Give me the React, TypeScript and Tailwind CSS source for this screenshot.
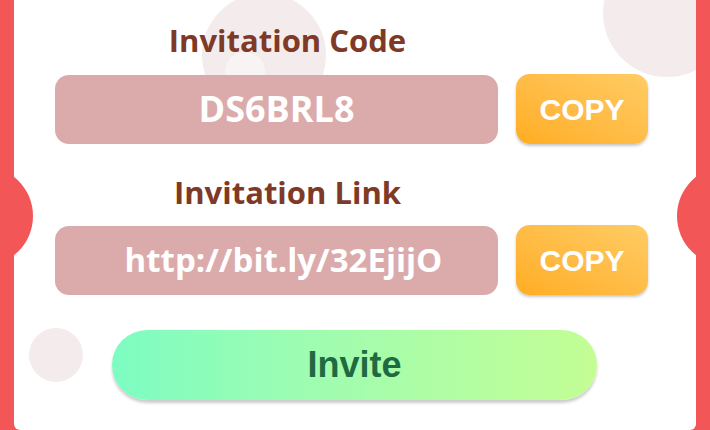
import React from "react";

const label = "font-['Open_Sans',sans-serif] font-bold text-[31px] leading-[40px] text-[#7e3a26] pr-[176px] text-center";
const field =
    "w-[443px] h-[69px] rounded-[14px] bg-[#dbabab] flex items-center justify-center font-['Open_Sans',sans-serif] font-bold text-white";

const CopyButton = () => (
    <button className="w-[132px] h-[70px] rounded-[14px] bg-gradient-to-tr from-[#ffad1f] to-[#ffcc62] shadow-[0_2px_3px_rgba(0,0,0,0.22)] font-['Liberation_Sans',Arial,sans-serif] font-bold text-[30px] text-white">
        COPY
    </button>
);

const App = () => {
    return (
        <div className="relative w-[710px] h-[430px] overflow-hidden bg-[#f25656] flex px-[14px]">
            {/* ticket notches */}
            <div className="absolute left-[-67px] top-[166px] w-[100px] h-[100px] rounded-full bg-[#f25656] z-10" />
            <div className="absolute right-[-67px] top-[166px] w-[100px] h-[100px] rounded-full bg-[#f25656] z-10" />

            <div className="relative flex-1 bg-white rounded-b-[6px] overflow-hidden">
                {/* background bubbles */}
                <div className="absolute left-[188px] top-[-7px] w-[124px] h-[124px] rounded-full bg-[#f4ecec]" />
                <div className="absolute left-[211px] top-[52px] w-[40px] h-[40px] rounded-full bg-[#f9f4f4]" />
                <div className="absolute left-[589px] top-[-51px] w-[128px] h-[128px] rounded-full bg-[#f4ecec]" />
                <div className="absolute left-[15px] top-[328px] w-[54px] h-[54px] rounded-full bg-[#f4ecec]" />

                <div className="relative flex flex-col pl-[41px] pt-[20px]">
                    <div className={label}>Invitation Code</div>
                    <div className="mt-[14px] flex items-center gap-[18px]">
                        <div className={field + " text-[36px]"}>DS6BRL8</div>
                        <CopyButton />
                    </div>

                    <div className={label + " mt-[28px]"}>Invitation Link</div>
                    <div className="mt-[13px] flex items-center gap-[18px]">
                        <div className={field + " text-[33px] pl-[14px]"}>http://bit.ly/32EjijO</div>
                        <CopyButton />
                    </div>

                    <button className="mt-[35px] ml-[57px] w-[485px] h-[70px] rounded-full bg-gradient-to-r from-[#7dfcc2] to-[#c4fd94] shadow-[0_3px_3px_rgba(0,0,0,0.2)] font-['Liberation_Sans',Arial,sans-serif] font-bold text-[36px] text-[#1f6a42]">
                        Invite
                    </button>
                </div>
            </div>
        </div>
    );
};

export default App;
